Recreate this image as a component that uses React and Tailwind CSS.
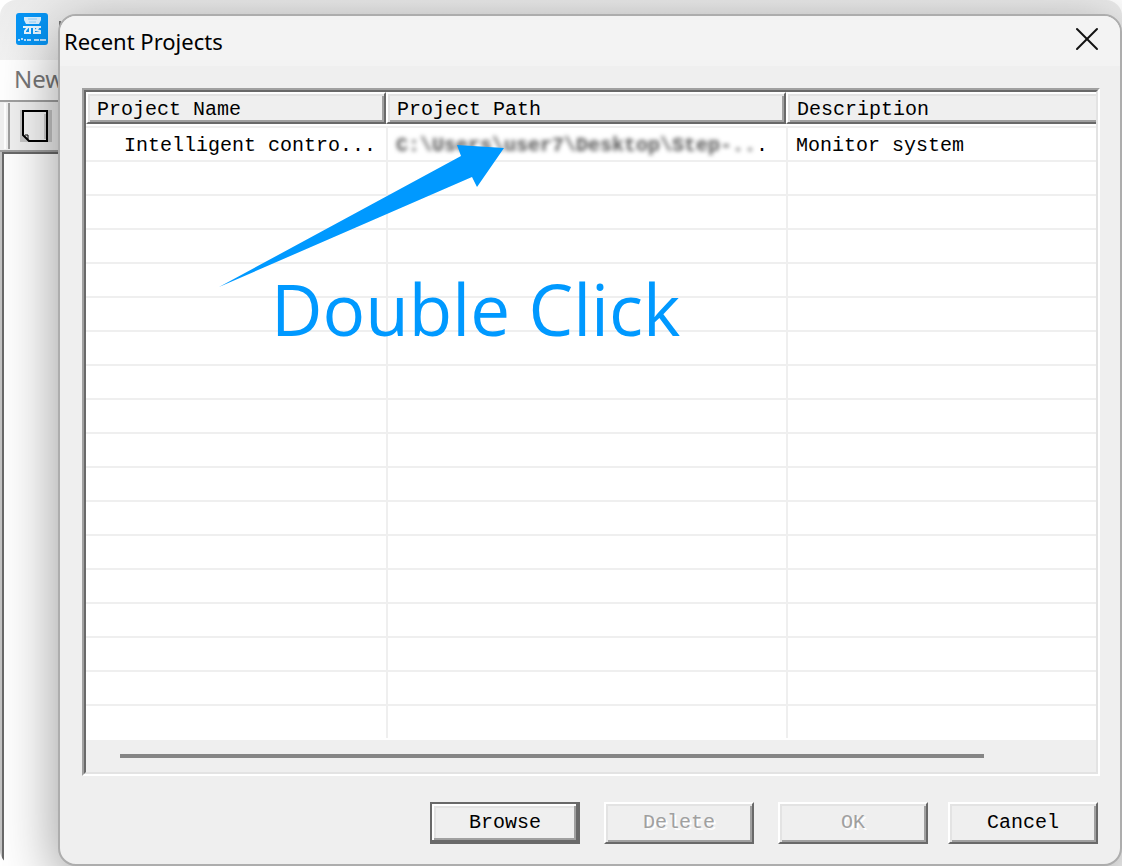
import { X } from "lucide-react";

const EMPTY_ROWS = Array.from({ length: 17 }, (_, i) => i);

function AppIcon() {
    return (
        <svg className="h-8 w-8" viewBox="0 0 32 32" fill="none" aria-hidden="true">
            <rect width="32" height="32" rx="3" fill="#0795f5" />
            <path d="M8 4h17v3l-2 4H10L8 7z" fill="#d9efff" />
            <path d="M12 6h9M13 9h7" stroke="#8fd0fb" strokeWidth="1" />
            <path d="M7 14h18M12 14l-3 4v2h5v-5M18 14v6h6v-2l-4-1 3-3" stroke="#e9f6ff" strokeWidth="2" />
            <path d="M2 27h2M5 26h2M8 27h2M11 27h4M18 27h5M24 27h6" stroke="#b9e1ff" strokeWidth="2" />
        </svg>
    );
}

function PageIcon() {
    return (
        <svg className="h-8 w-8" viewBox="0 0 32 32" aria-hidden="true">
            <path d="M0 0h32v32H0z" fill="#c6c6c6" />
            <path d="M3 1h24v30H9l-6-6z" fill="#f6f6f6" stroke="#000" strokeWidth="2" />
            <path d="M25 4v25" stroke="#cccccc" strokeWidth="2" />
            <path d="M5 25h3v4" fill="none" stroke="#000" strokeWidth="1" />
        </svg>
    );
}

function MainWindow() {
    return (
        <div className="col-start-1 row-start-1 flex flex-col overflow-hidden rounded-2xl bg-white">
            <header className="flex h-[60px] items-start gap-[11px] bg-gradient-to-b from-[#ececec] to-[#f2f2f2] pt-[13px] pl-4">
                <AppIcon />
                <span className="mt-2 h-4 w-0.5 bg-[#777777]" />
            </header>
            <nav className="flex h-10 items-center pb-0.5 pl-[14px] font-['Noto_Sans',sans-serif] text-2xl text-[#777777]">
                <button type="button">New</button>
            </nav>
            <div className="flex h-[52px] items-center border-y-2 border-[#a0a0a0] bg-[#f0f0f0] pl-1">
                <span className="mr-[10px] h-[46px] w-1.5 border-r-2 border-l-2 border-r-[#a0a0a0] border-l-white" />
                <button type="button" aria-label="New project">
                    <PageIcon />
                </button>
            </div>
            <div className="flex flex-1 border-l-2 border-[#c4c4c4]">
                <div className="flex-1 border-t-2 border-l-2 border-[#696969] bg-white" />
            </div>
        </div>
    );
}

function HeaderCell({ label, width, last = false }) {
    return (
        <th className={`${width} p-0 pb-0.5 text-left font-normal`}>
            <div
                className={
                    last
                        ? "flex h-8 items-center border-t-2 border-b-2 border-l-2 border-t-white border-b-[#696969] border-l-white bg-[#efefef] pt-1 pl-[9px] shadow-[inset_2px_2px_#e3e3e3,inset_0_-2px_#a0a0a0]"
                        : "flex h-8 items-center border-2 border-t-white border-r-[#696969] border-b-[#696969] border-l-white bg-[#efefef] pt-1 pl-[9px] shadow-[inset_2px_2px_#e3e3e3,inset_-2px_-2px_#a0a0a0]"
                }
            >
                {label}
            </div>
        </th>
    );
}

function ProjectTable() {
    return (
        <table className="w-full table-fixed border-separate border-spacing-0 bg-white">
            <thead>
                <tr>
                    <HeaderCell label="Project Name" width="w-[300px]" />
                    <HeaderCell label="Project Path" width="w-[400px]" />
                    <HeaderCell label="Description" width="w-auto" last />
                </tr>
            </thead>
            <tbody>
                <tr className="h-[34px] whitespace-pre">
                    <td className="border-t-2 border-[#efefef] p-0 pt-1 pl-[38px]">Intelligent contro...</td>
                    <td className="border-t-2 border-l-2 border-[#efefef] p-0 pt-1 pl-2">
                        <span className="inline-block font-bold text-[#555555] blur-[2px]">
                            {"C:\\Users\\user7\\Desktop\\Step-.."}
                        </span>
                        .
                    </td>
                    <td className="border-t-2 border-l-2 border-[#efefef] p-0 pt-1 pl-2">Monitor system</td>
                </tr>
                {EMPTY_ROWS.map((row) => (
                    <tr key={row} className="h-[34px]">
                        <td className="border-t-2 border-[#efefef] p-0" />
                        <td className="border-t-2 border-l-2 border-[#efefef] p-0" />
                        <td className="border-t-2 border-l-2 border-[#efefef] p-0" />
                    </tr>
                ))}
            </tbody>
        </table>
    );
}

function DoubleClickHint() {
    return (
        <>
            <svg
                className="pointer-events-none absolute top-[53px] left-[133px] h-[142px] w-[285px]"
                viewBox="0 0 285 142"
                aria-hidden="true"
            >
                <path d="M0 142L242 11L238 0L285 3L258 42L253 32z" fill="#0099ff" />
            </svg>
            <p className="pointer-events-none absolute top-[169px] left-[185px] font-['Open_Sans',sans-serif] text-[71px] leading-[96px] whitespace-nowrap text-[#0099ff]">
                Double Click
            </p>
        </>
    );
}

function DialogButton({ label, primary = false, disabled = false }) {
    return (
        <button
            type="button"
            disabled={disabled}
            className={
                primary
                    ? "h-[42px] w-[150px] border-2 border-[#696969] bg-[#efefef] shadow-[inset_-2px_-2px_#696969,inset_2px_2px_#ffffff,inset_-4px_-4px_#a0a0a0,inset_4px_4px_#e3e3e3]"
                    : "h-[42px] w-[150px] border-2 border-t-white border-r-[#696969] border-b-[#696969] border-l-white bg-[#efefef] shadow-[inset_2px_2px_#e3e3e3,inset_-2px_-2px_#a0a0a0] disabled:text-[#a0a0a0] disabled:[text-shadow:2px_2px_#ffffff]"
            }
        >
            {label}
        </button>
    );
}

function RecentProjectsDialog() {
    return (
        <section
            role="dialog"
            aria-labelledby="dialog-title"
            className="relative col-start-1 row-start-1 mt-[14px] ml-[58px] overflow-hidden rounded-[18px] border-2 border-[#adadad] bg-[#efefef] shadow-[0_16px_60px_rgba(0,0,0,0.42)]"
        >
            <header className="flex h-[50px] items-center justify-between bg-[#f3f3f3] pr-[13px] pl-1">
                <h1 id="dialog-title" className="font-['Noto_Sans',sans-serif] text-[22px] text-black">
                    Recent Projects
                </h1>
                <button type="button" aria-label="Close" className="self-start pt-[3px]">
                    <X size={40} strokeWidth={1.2} color="#111111" />
                </button>
            </header>

            <div className="py-[22px] pr-5 pb-5 pl-[22px] font-['Liberation_Mono',monospace] text-xl text-black">
                <div className="border-2 border-t-[#a0a0a0] border-r-white border-b-white border-l-[#a0a0a0]">
                    <div className="relative border-2 border-t-[#696969] border-r-[#e3e3e3] border-b-[#e3e3e3] border-l-[#696969] bg-white">
                        <ProjectTable />
                        <div className="mt-0.5 flex h-8 items-center bg-[#efefef] pr-28 pl-[34px]">
                            <div className="h-1 flex-1 bg-[#858585]" />
                        </div>
                        <DoubleClickHint />
                    </div>
                </div>

                <div className="mt-[26px] flex justify-end gap-6 pr-0.5">
                    <DialogButton label="Browse" primary />
                    <DialogButton label="Delete" disabled />
                    <div className="flex gap-5">
                        <DialogButton label="OK" disabled />
                        <DialogButton label="Cancel" />
                    </div>
                </div>
            </div>
        </section>
    );
}

export default function App() {
    return (
        <main className="grid min-h-screen grid-cols-1 overflow-hidden bg-white">
            <MainWindow />
            <RecentProjectsDialog />
        </main>
    );
}
